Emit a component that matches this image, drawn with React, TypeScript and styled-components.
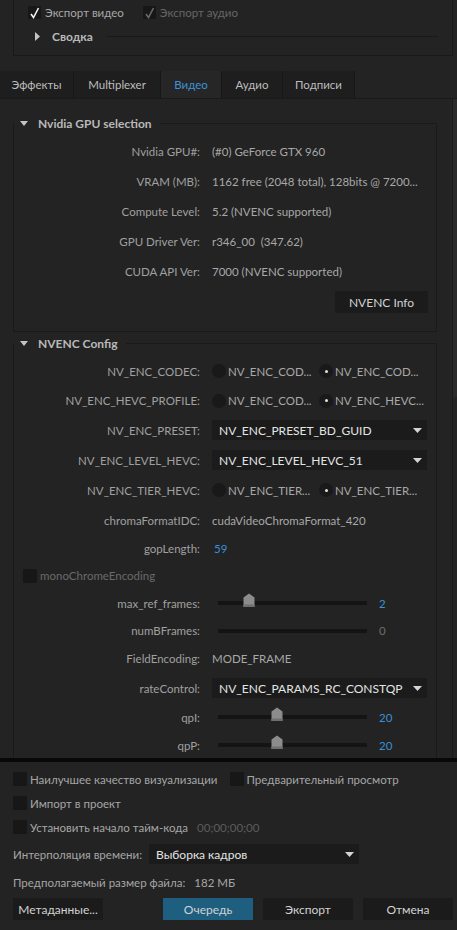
import React from 'react';
import styled, { createGlobalStyle } from 'styled-components';

const GlobalStyle = createGlobalStyle`
  html, body { margin: 0; padding: 0; background: #232323; }
  body { font-family: Lato, "Liberation Sans", Arial, sans-serif; font-size: 11.5px; color: #a2a2a2; }
  * { box-sizing: border-box; }
`;

const Page = styled.div`
  width: 457px; height: 930px; overflow: hidden;
  display: flex; flex-direction: column; background: #232323;
`;

/* ---------- top summary ---------- */
const TopArea = styled.div`height: 71px; flex: none;`;
const SummaryBox = styled.div`
  margin-left: 13px; width: 440px; height: 56px;
  border: 1px solid #191919; border-top: none;
  padding: 5px 0 0 14px;
  display: flex; flex-direction: column;
`;
const CheckRow = styled.div`display: flex; align-items: center; height: 15px; gap: 19px;`;
const CheckItem = styled.label<{ $disabled?: boolean }>`
  display: flex; align-items: center; gap: 4px; white-space: nowrap;
  color: ${p => (p.$disabled ? '#666666' : '#a8a8a8')};
`;
const Box = styled.span<{ $size?: number }>`
  width: ${p => p.$size ?? 13}px; height: ${p => p.$size ?? 13}px; flex: none;
  background: #171717; display: flex; align-items: center; justify-content: center;
`;
const SummaryRow = styled.div`
  margin-top: 5px; height: 22px; display: flex; align-items: center;
  padding-left: 7px; margin-right: 14px;
`;
const BoldTitle = styled.span`font-weight: 700; font-size: 12px; color: #b9b9b9; white-space: nowrap;`;
const Rule = styled.div`flex: 1; border-top: 1px solid #191919; margin-left: 14px;`;

/* ---------- tabs ---------- */
const TabBar = styled.div`display: flex; height: 27px; flex: none;`;
const Tab = styled.div<{ $active?: boolean; $w: number }>`
  width: ${p => p.$w}px; height: 27px; flex: none;
  display: flex; align-items: center; justify-content: center;
  background: ${p => (p.$active ? '#262626' : '#1e1e1e')};
  border-right: 1px solid #171717;
  color: ${p => (p.$active ? '#3d93d6' : '#bdbdbd')};
  white-space: nowrap;
`;

/* ---------- content panel ---------- */
const Content = styled.div`
  height: 660px; flex: none; display: flex;
  border-top: 1px solid #1a1a1a;
`;
const ScrollArea = styled.div`
  width: 453px; flex: none; overflow: hidden;
  border-right: 1px solid #1a1a1a;
`;
const ScrollTrack = styled.div`width: 4px; flex: none;`;
const ScrollThumb = styled.div`height: 298px; background: #2a2a2a;`;

const Section = styled.fieldset<{ $mt: number; $pb?: number }>`
  margin: ${p => p.$mt}px 0 0 13px; width: 424px;
  border: 1px solid #1a1a1a; padding: 5px 0 ${p => p.$pb ?? 0}px 0;
  min-inline-size: 0;
`;
const Legend = styled.legend`
  display: flex; align-items: center; height: 16px;
  padding: 0 8px 0 6px; margin: 0;
  gap: 10px;
`;

const Row = styled.div<{ $h?: number }>`
  display: grid; grid-template-columns: 186px 1fr; column-gap: 12px;
  align-items: center; height: ${p => p.$h ?? 30}px; white-space: pre;
`;
const Label = styled.div`text-align: right; color: #a0a0a0;`;
const Value = styled.div<{ $tone?: 'blue' | 'dim' }>`
  color: ${p => (p.$tone === 'blue' ? '#3a8fd6' : p.$tone === 'dim' ? '#737373' : '#a8a8a8')};
  overflow: hidden;
`;
const ButtonRow = styled.div`display: flex; justify-content: flex-end; margin: 5px 8px 0 0;`;
const Button = styled.button<{ $primary?: boolean }>`
  width: 90px; height: 22px; border: none; padding: 0;
  background: ${p => (p.$primary ? '#1e5f80' : '#1b1b1b')};
  color: #d2d2d2; font: inherit; font-size: 12px;
`;
const InfoButton = styled(Button)`width: 93px;`;

const RadioGroup = styled.div`display: flex;`;
const RadioOption = styled.div`
  width: 107px; display: flex; align-items: center; gap: 2px;
  white-space: nowrap; overflow: hidden; color: #a8a8a8;
`;
const RadioDot = styled.span<{ $on?: boolean }>`
  width: 14px; height: 14px; border-radius: 50%; background: #191919; flex: none;
  display: flex; align-items: center; justify-content: center;
  &::after {
    content: ''; width: 3px; height: 3px; border-radius: 50%;
    background: ${p => (p.$on ? '#e2e2e2' : 'transparent')};
  }
`;

const Select = styled.div<{ $w: number }>`
  width: ${p => p.$w}px; height: 20px; background: #1b1b1b;
  display: flex; align-items: center; justify-content: space-between;
  padding: 0 5px 0 7px; color: #e4e4e4; white-space: nowrap; font-size: 12px;
`;

const CheckLine = styled.div<{ $h?: number; $pl?: number }>`
  display: flex; align-items: center; height: ${p => p.$h ?? 24}px;
  padding-left: ${p => p.$pl ?? 0}px; gap: 3px; white-space: nowrap;
`;
const Muted = styled.span`color: #6a6a6a;`;

const SliderWrap = styled.div`display: flex; align-items: center; padding-left: 6px;`;
const Track = styled.div`
  position: relative; width: 149px; height: 4px; background: #141414; flex: none;
`;
const Thumb = styled.div`
  position: absolute; top: -8px; width: 12px; height: 14px;
`;
const SliderValue = styled.span<{ $dim?: boolean }>`
  margin-left: 12px; color: ${p => (p.$dim ? '#6e6e6e' : '#3a8fd6')};
`;

const Separator = styled.div`height: 4px; flex: none; background: #080808;`;

/* ---------- bottom ---------- */
const Bottom = styled.div`
  flex: 1; display: flex; flex-direction: column;
  padding: 5px 4px 0 13px; color: #a6a6a6;
`;
const BottomLine = styled.div<{ $h: number }>`
  display: flex; align-items: center; height: ${p => p.$h}px; white-space: nowrap;
`;
const CheckGroup = styled.div`display: flex; align-items: center; gap: 3px;`;
const Actions = styled.div`display: flex; margin-top: 3px; gap: 10px;`;
const Spacer = styled.div`flex: 1;`;

/* ---------- icons ---------- */
const TriDown = () => (
  <svg width="8" height="5" viewBox="0 0 8 5"><polygon points="0,0 8,0 4,5" fill="#c4c4c4" /></svg>
);
const TriRight = () => (
  <svg width="5" height="9" viewBox="0 0 5 9"><polygon points="0,0 5,4.5 0,9" fill="#c4c4c4" /></svg>
);
const Caret = () => (
  <svg width="9" height="5" viewBox="0 0 9 5"><polygon points="0,0 9,0 4.5,5" fill="#d4d4d4" /></svg>
);
const Check = ({ color }: { color: string }) => (
  <svg width="11" height="12" viewBox="0 0 11 12">
    <polyline points="2,7 4.5,10.5 9.5,1" fill="none" stroke={color} strokeWidth="1.6" />
  </svg>
);
const ThumbShape = () => (
  <svg width="12" height="14" viewBox="0 0 12 14">
    <path d="M6 0.5 L11.5 4.5 L11.5 14 L0.5 14 L0.5 4.5 Z" fill="#8c8c8c" />
    <rect x="0.5" y="11.5" width="11" height="2.5" fill="#6f6f6f" />
  </svg>
);

const Slider = ({ value, min, max, dim }: { value: number; min: number; max: number; dim?: boolean }) => (
  <SliderWrap>
    <Track>
      {!dim && (
        <Thumb style={{ left: `${Math.round(((value - min) / (max - min)) * 137)}px` }}>
          <ThumbShape />
        </Thumb>
      )}
    </Track>
    <SliderValue $dim={dim}>{value}</SliderValue>
  </SliderWrap>
);

const Radio = ({ a, b }: { a: string; b: string }) => (
  <RadioGroup>
    <RadioOption><RadioDot />{a}</RadioOption>
    <RadioOption><RadioDot $on />{b}</RadioOption>
  </RadioGroup>
);

const gpuRows: [string, string][] = [
  ['Nvidia GPU#:', '(#0) GeForce GTX 960'],
  ['VRAM (MB):', '1162 free (2048 total), 128bits @ 7200...'],
  ['Compute Level:', '5.2 (NVENC supported)'],
  ['GPU Driver Ver:', 'r346_00  (347.62)'],
  ['CUDA API Ver:', '7000 (NVENC supported)'],
];

const tabs: [string, number][] = [
  ['Эффекты', 74],
  ['Multiplexer', 87],
  ['Видео', 61],
  ['Аудио', 61],
  ['Подписи', 72],
];

export default function App() {
  return (
    <Page>
      <GlobalStyle />
      <TopArea>
        <SummaryBox>
          <CheckRow>
            <CheckItem><Box><Check color="#f0f0f0" /></Box>Экспорт видео</CheckItem>
            <CheckItem $disabled><Box><Check color="#6a6a6a" /></Box>Экспорт аудио</CheckItem>
          </CheckRow>
          <SummaryRow>
            <TriRight />
            <BoldTitle style={{ marginLeft: 12 }}>Сводка</BoldTitle>
            <Rule />
          </SummaryRow>
        </SummaryBox>
      </TopArea>

      <TabBar>
        {tabs.map(([t, w]) => (
          <Tab key={t} $w={w} $active={t === 'Видео'}>{t}</Tab>
        ))}
      </TabBar>

      <Content>
        <ScrollArea>
          <Section $mt={16} $pb={18}>
            <Legend><TriDown /><BoldTitle>Nvidia GPU selection</BoldTitle></Legend>
            {gpuRows.map(([l, v]) => (
              <Row key={l}><Label>{l}</Label><Value>{v}</Value></Row>
            ))}
            <ButtonRow><InfoButton>NVENC Info</InfoButton></ButtonRow>
          </Section>

          <Section $mt={3}>
            <Legend><TriDown /><BoldTitle>NVENC Config</BoldTitle></Legend>
            <Row $h={30}><Label>NV_ENC_CODEC:</Label><Radio a="NV_ENC_COD..." b="NV_ENC_COD..." /></Row>
            <Row $h={29}><Label>NV_ENC_HEVC_PROFILE:</Label><Radio a="NV_ENC_COD..." b="NV_ENC_HEVC..." /></Row>
            <Row $h={30}><Label>NV_ENC_PRESET:</Label><Select $w={215}>NV_ENC_PRESET_BD_GUID<Caret /></Select></Row>
            <Row $h={30}><Label>NV_ENC_LEVEL_HEVC:</Label><Select $w={215}>NV_ENC_LEVEL_HEVC_51<Caret /></Select></Row>
            <Row $h={30}><Label>NV_ENC_TIER_HEVC:</Label><Radio a="NV_ENC_TIER..." b="NV_ENC_TIER..." /></Row>
            <Row $h={30}><Label>chromaFormatIDC:</Label><Value>cudaVideoChromaFormat_420</Value></Row>
            <Row $h={27}><Label>gopLength:</Label><Value $tone="blue" style={{ paddingLeft: 2 }}>59</Value></Row>
            <CheckLine $h={27} $pl={9}><Box $size={14} /><Muted>monoChromeEncoding</Muted></CheckLine>
            <Row $h={28}><Label>max_ref_frames:</Label><Slider value={2} min={0} max={11} /></Row>
            <Row $h={27}><Label>numBFrames:</Label><Slider value={0} min={0} max={4} dim /></Row>
            <Row $h={29}><Label>FieldEncoding:</Label><Value>MODE_FRAME</Value></Row>
            <Row $h={30}><Label>rateControl:</Label><Select $w={215}>NV_ENC_PARAMS_RC_CONSTQP<Caret /></Select></Row>
            <Row $h={28}><Label>qpI:</Label><Slider value={20} min={0} max={52} /></Row>
            <Row $h={28}><Label>qpP:</Label><Slider value={20} min={0} max={52} /></Row>
          </Section>
        </ScrollArea>
        <ScrollTrack><ScrollThumb /></ScrollTrack>
      </Content>

      <Separator />

      <Bottom>
        <BottomLine $h={24}>
          <CheckGroup><Box $size={14} />Наилучшее качество визуализации</CheckGroup>
          <CheckGroup style={{ marginLeft: 12 }}><Box $size={14} />Предварительный просмотр</CheckGroup>
        </BottomLine>
        <BottomLine $h={24}>
          <CheckGroup><Box $size={14} />Импорт в проект</CheckGroup>
        </BottomLine>
        <BottomLine $h={24}>
          <CheckGroup><Box $size={14} />Установить начало тайм-кода</CheckGroup>
          <Muted style={{ marginLeft: 9, color: '#5c5c5c' }}>00;00;00;00</Muted>
        </BottomLine>
        <BottomLine $h={30}>
          <span>Интерполяция времени:</span>
          <Select $w={210} style={{ marginLeft: 7 }}>Выборка кадров<Caret /></Select>
        </BottomLine>
        <BottomLine $h={26}>
          <span>Предполагаемый размер файла:</span>
          <span style={{ marginLeft: 9 }}>182 МБ</span>
        </BottomLine>
        <Actions>
          <Button>Метаданные...</Button>
          <Spacer />
          <Button $primary>Очередь</Button>
          <Button>Экспорт</Button>
          <Button>Отмена</Button>
        </Actions>
      </Bottom>
    </Page>
  );
}
